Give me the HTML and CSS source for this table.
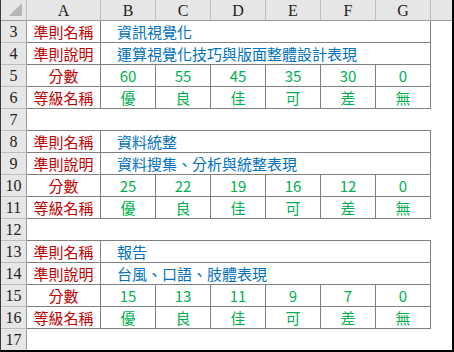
FILE: index.html
```html
<!DOCTYPE html>
<html lang="zh-Hant">
<head>
<meta charset="utf-8">
<title>評分規準</title>
<link rel="stylesheet" href="styles.css">
</head>
<body>
<div class="frame">
  <div class="sheet">
    <!-- column headers -->
    <div class="corner"><svg width="14" height="14" viewBox="0 0 14 14"><polygon points="13,0 13,13 0,13" fill="#b5b5b5"/></svg></div>
    <div class="colhead">A</div>
    <div class="colhead">B</div>
    <div class="colhead">C</div>
    <div class="colhead">D</div>
    <div class="colhead">E</div>
    <div class="colhead">F</div>
    <div class="colhead">G</div>
    <div class="colhead last"></div>

    <!-- table 1 -->
    <div class="rowhead">3</div>
    <div class="cell label">準則名稱</div>
    <div class="cell desc">資訊視覺化</div>
    <div class="blank"></div>

    <div class="rowhead">4</div>
    <div class="cell label">準則說明</div>
    <div class="cell desc">運算視覺化技巧與版面整體設計表現</div>
    <div class="blank"></div>

    <div class="rowhead">5</div>
    <div class="cell label">分數</div>
    <div class="cell val">60</div>
    <div class="cell val">55</div>
    <div class="cell val">45</div>
    <div class="cell val">35</div>
    <div class="cell val">30</div>
    <div class="cell val">0</div>
    <div class="blank"></div>

    <div class="rowhead">6</div>
    <div class="cell label">等級名稱</div>
    <div class="cell val">優</div>
    <div class="cell val">良</div>
    <div class="cell val">佳</div>
    <div class="cell val">可</div>
    <div class="cell val">差</div>
    <div class="cell val">無</div>
    <div class="blank"></div>

    <div class="rowhead">7</div>
    <div class="gap"></div>
    <div class="blank"></div>

    <!-- table 2 -->
    <div class="rowhead">8</div>
    <div class="cell label">準則名稱</div>
    <div class="cell desc">資料統整</div>
    <div class="blank"></div>

    <div class="rowhead">9</div>
    <div class="cell label">準則說明</div>
    <div class="cell desc">資料搜集、分析與統整表現</div>
    <div class="blank"></div>

    <div class="rowhead">10</div>
    <div class="cell label">分數</div>
    <div class="cell val">25</div>
    <div class="cell val">22</div>
    <div class="cell val">19</div>
    <div class="cell val">16</div>
    <div class="cell val">12</div>
    <div class="cell val">0</div>
    <div class="blank"></div>

    <div class="rowhead">11</div>
    <div class="cell label">等級名稱</div>
    <div class="cell val">優</div>
    <div class="cell val">良</div>
    <div class="cell val">佳</div>
    <div class="cell val">可</div>
    <div class="cell val">差</div>
    <div class="cell val">無</div>
    <div class="blank"></div>

    <div class="rowhead">12</div>
    <div class="gap"></div>
    <div class="blank"></div>

    <!-- table 3 -->
    <div class="rowhead">13</div>
    <div class="cell label">準則名稱</div>
    <div class="cell desc">報告</div>
    <div class="blank"></div>

    <div class="rowhead">14</div>
    <div class="cell label">準則說明</div>
    <div class="cell desc">台風、口語、肢體表現</div>
    <div class="blank"></div>

    <div class="rowhead">15</div>
    <div class="cell label">分數</div>
    <div class="cell val">15</div>
    <div class="cell val">13</div>
    <div class="cell val">11</div>
    <div class="cell val">9</div>
    <div class="cell val">7</div>
    <div class="cell val">0</div>
    <div class="blank"></div>

    <div class="rowhead">16</div>
    <div class="cell label">等級名稱</div>
    <div class="cell val">優</div>
    <div class="cell val">良</div>
    <div class="cell val">佳</div>
    <div class="cell val">可</div>
    <div class="cell val">差</div>
    <div class="cell val">無</div>
    <div class="blank"></div>

    <div class="rowhead">17</div>
    <div class="rest"></div>
  </div>
</div>
</body>
</html>
```

FILE: styles.css
```css
html, body {
  margin: 0;
  padding: 0;
  background: #ffffff;
}

.frame {
  box-sizing: border-box;
  width: 454px;
  height: 352px;
  overflow: hidden;
  border-left: 1px solid #3a3a3a;
  border-right: 2px solid #000000;
  border-bottom: 2px solid #000000;
  background: #ffffff;
}

.sheet {
  display: grid;
  grid-template-columns: 26px 74px repeat(6, 55px) 21px;
  grid-template-rows: 21px;
  grid-auto-rows: 22px;
  font-family: "Noto Sans CJK TC", "Noto Sans", sans-serif;
  font-size: 15px;
}

.sheet > div {
  box-sizing: border-box;
  min-width: 0;
}

.corner {
  background: #e6e6e6;
  border-right: 1px solid #bcbcbc;
  border-bottom: 1px solid #9b9b9b;
  display: flex;
  align-items: flex-end;
  justify-content: flex-end;
  padding: 0 3px 3px 0;
}

.corner svg {
  display: block;
}

.colhead {
  background: #e6e6e6;
  border-right: 1px solid #bcbcbc;
  border-bottom: 1px solid #9b9b9b;
  font-family: "Liberation Serif", serif;
  font-size: 16px;
  color: #222222;
  display: flex;
  align-items: center;
  justify-content: center;
  padding-top: 1px;
}

.colhead.last {
  border-right: none;
}

.rowhead {
  background: #e6e6e6;
  border-right: 1px solid #9b9b9b;
  border-bottom: 1px solid #bcbcbc;
  font-family: "Liberation Serif", serif;
  font-size: 16px;
  color: #222222;
  display: flex;
  align-items: center;
  justify-content: center;
  padding-top: 1px;
}

.cell {
  border-right: 1px solid #808080;
  border-bottom: 1px solid #808080;
  display: flex;
  align-items: center;
  line-height: 1;
  padding-bottom: 1px;
}

.label {
  justify-content: center;
  color: #c00000;
}

.desc {
  grid-column: span 6;
  padding-left: 16px;
  color: #0070c0;
}

.val {
  justify-content: center;
  color: #00b050;
}

.gap {
  grid-column: span 7;
  border-bottom: 1px solid #808080;
}

.rest {
  grid-column: span 8;
}
```
